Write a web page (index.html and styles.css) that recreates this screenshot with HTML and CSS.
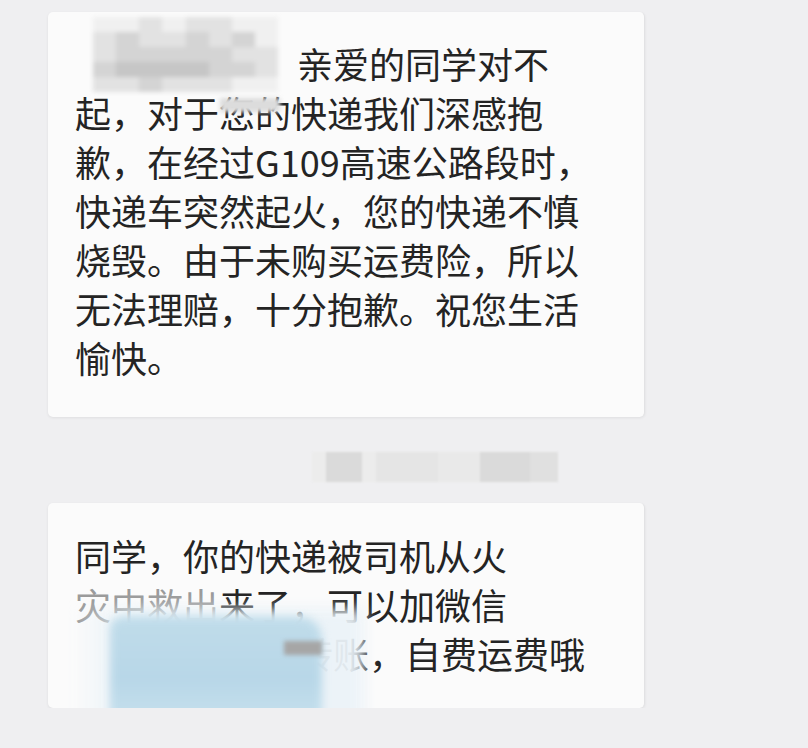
FILE: index.html
```html
<!DOCTYPE html>
<html lang="zh-CN">
<head>
  <meta charset="UTF-8" />
  <meta name="viewport" content="width=device-width, initial-scale=1.0"/>
  <title>快递通知</title>
  <link rel="stylesheet" href="styles.css">
</head>
<body>
  <div class="chat">
    <div class="bubble">
      <!-- mosaic over the sender's name -->
      <div class="mosaic">
        <span class="s1"></span><span class="s1"></span><span class="s2"></span><span class="s1"></span><span class="s2"></span><span class="s2"></span><span class="s1"></span><span class="s1"></span>
        <span class="s2"></span><span class="s3"></span><span class="s2"></span><span class="s2"></span><span class="s3"></span><span class="s2"></span><span class="s3"></span><span class="s1"></span>
        <span class="s2"></span><span class="s3"></span><span class="s3"></span><span class="s3"></span><span class="s3"></span><span class="s3"></span><span class="s2"></span><span class="s2"></span>
        <span class="s3"></span><span class="s4"></span><span class="s4"></span><span class="s4"></span><span class="s4"></span><span class="s3"></span><span class="s3"></span><span class="s2"></span>
        <span class="s2"></span><span class="s2"></span><span class="s3"></span><span class="s2"></span><span class="s2"></span><span class="s2"></span><span class="s1"></span><span class="s1"></span>
      </div>
      <div class="mosaic-tail"></div>
      <p class="msg"><span class="name-gap"></span>亲爱的同学对不<br>起，对于您的快递我们深感抱<br>歉，在经过G109高速公路段时，<br>快递车突然起火，您的快递不慎<br>烧毁。由于未购买运费险，所以<br>无法理赔，十分抱歉。祝您生活<br>愉快。</p>
    </div>

    <div class="time">
      <div class="time-blur">
        <span class="t1"></span><span class="t3"></span><span class="t1"></span><span class="t2"></span><span class="t1"></span><span class="t3"></span><span class="t2"></span>
      </div>
    </div>

    <div class="bubble bubble-last">
      <p class="msg">同学，你的快递被司机从火<br><span class="faded">灾中救出</span>来了，可以加微信<br><span class="name-gap"></span>转账，自费运费哦</p>
      <!-- blurred account number -->
      <div class="smudge">
        <div class="smudge-haze"></div>
        <div class="smudge-blue"></div>
        <div class="smudge-grey"></div>
      </div>
    </div>
  </div>
</body>
</html>
```

FILE: styles.css
```css
body {
  margin: 0;
  background-color: #efeff1;
  font-family: "Noto Sans CJK SC", "Noto Sans", sans-serif;
}

.chat {
  width: 597px;
  padding: 12px 0 0 48px;
}

.bubble {
  position: relative;
  background: #fbfbfb;
  border-radius: 5px;
  border-right: 1px solid #e2e2e4;
  box-shadow: 0 1px 3px rgba(0, 0, 0, 0.07);
  padding: 27px 20px 35px 27px;
}

.bubble-last {
  padding-top: 28px;
  padding-bottom: 30px;
}

.msg {
  margin: 0;
  font-size: 36px;
  line-height: 49px;
  color: #242424;
  white-space: nowrap;
}

.name-gap {
  display: inline-block;
  width: 222px;
}

.faded {
  color: #9b9b9b;
}

/* name mosaic */
.mosaic {
  position: absolute;
  left: 45px;
  top: 5px;
  width: 185px;
  height: 75px;
  display: grid;
  grid-template-columns: repeat(8, 1fr);
  grid-template-rows: repeat(5, 1fr);
  filter: blur(2px);
}

.mosaic-tail {
  position: absolute;
  left: 172px;
  top: 86px;
  width: 60px;
  height: 14px;
  background: #dcdcdc;
  filter: blur(2px);
}

.s1 { background: #f0f0f0; }
.s2 { background: #e2e2e2; }
.s3 { background: #d4d4d4; }
.s4 { background: #c6c6c6; }

/* time stamp */
.time {
  height: 86px;
  box-sizing: border-box;
  padding: 35px 0 0 264px;
}

.time-blur {
  display: flex;
  width: 246px;
  height: 30px;
  filter: blur(1px);
}

.time-blur span { height: 100%; }
.t1 { flex: 0 0 14px; background: #ececec; }
.t2 { flex: 0 0 60px; background: #e5e5e5; }
.t3 { flex: 0 0 36px; background: #dadada; }
.time-blur span:nth-child(4) { flex-basis: 62px; }
.time-blur span:nth-child(5) { flex-basis: 42px; background: #e9e9e9; }
.time-blur span:nth-child(6) { flex-basis: 50px; }
.time-blur span:nth-child(7) { flex-basis: 28px; background: #e0e0e0; }

/* account smudge */
.smudge {
  position: absolute;
  left: 26px;
  top: 102px;
  width: 310px;
  height: 124px;
}

.smudge-haze {
  position: absolute;
  left: 0;
  top: 4px;
  width: 290px;
  height: 120px;
  background: linear-gradient(90deg, rgba(240, 246, 250, 0) 0%, rgba(228, 240, 247, 0.95) 22%, rgba(236, 243, 248, 0.95) 100%);
  filter: blur(7px);
}

.smudge-blue {
  position: absolute;
  left: 36px;
  top: 12px;
  width: 212px;
  height: 104px;
  background: linear-gradient(180deg, #c0dcea 0%, #b8d7e8 60%, #c6e0ed 100%);
  border-radius: 12px 22px 4px 4px;
  filter: blur(4px);
}

.smudge-grey {
  position: absolute;
  left: 210px;
  top: 36px;
  width: 38px;
  height: 14px;
  background: #a6a6a6;
  filter: blur(2px);
}
```
